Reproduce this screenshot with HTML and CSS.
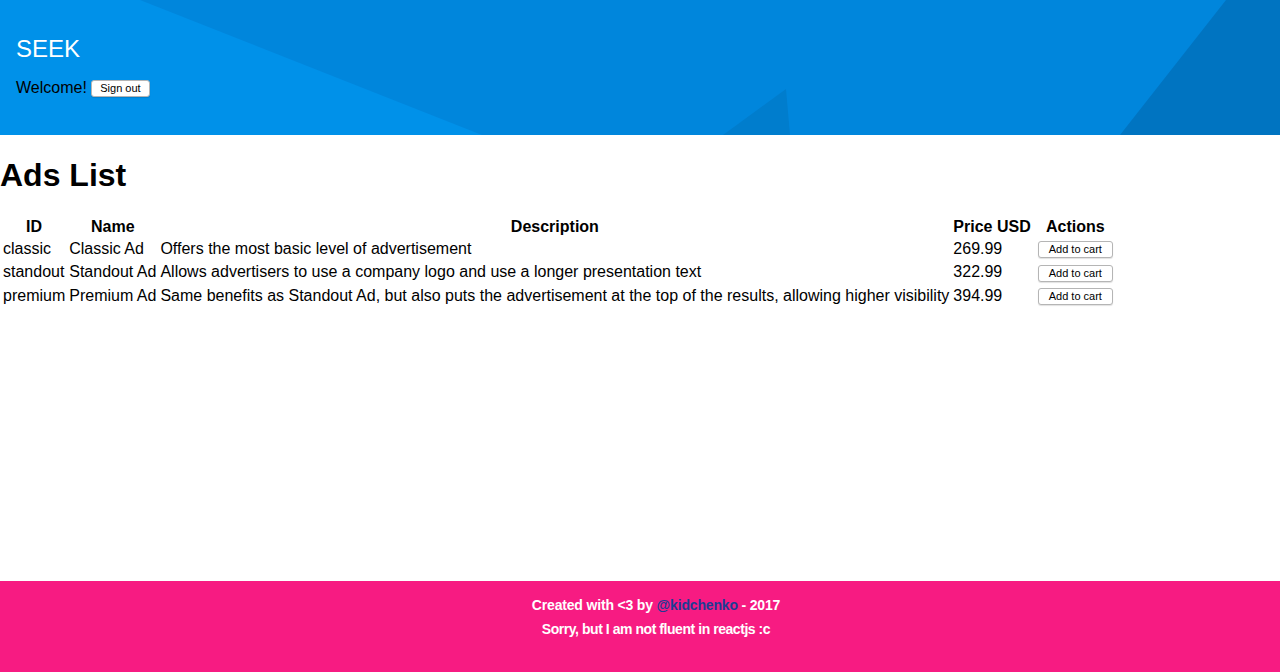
FILE: index.html
```html
<!DOCTYPE html>
<html>
<head>
<meta charset="utf-8">
<link rel="stylesheet" href="styles.css">
</head>
<body>
<div class="page">
  <header class="hero">
    <svg class="hero-bg" viewBox="0 0 1280 135" preserveAspectRatio="none" aria-hidden="true">
      <rect x="0" y="0" width="1280" height="135" fill="#0091e9"/>
      <polygon points="140,0 1280,0 1280,135 482,135" fill="#0086dc"/>
      <polygon points="723,135 786,89 790,135" fill="#007dcd"/>
      <polygon points="1226,0 1280,0 1280,135 1120,135" fill="#0074c1"/>
    </svg>
    <div class="hero-content">
      <div class="brand">SEEK</div>
      <div class="welcome">Welcome! <button class="btn">Sign out</button></div>
    </div>
  </header>
  <main class="main">
    <h1 class="title">Ads List</h1>
    <table class="ads">
      <thead>
        <tr><th>ID</th><th>Name</th><th>Description</th><th>Price USD</th><th>Actions</th></tr>
      </thead>
      <tbody>
        <tr><td>classic</td><td>Classic Ad</td><td>Offers the most basic level of advertisement</td><td>269.99</td><td class="act"><button class="btn">Add to cart</button></td></tr>
        <tr><td>standout</td><td>Standout Ad</td><td>Allows advertisers to use a company logo and use a longer presentation text</td><td>322.99</td><td class="act"><button class="btn">Add to cart</button></td></tr>
        <tr><td>premium</td><td>Premium Ad</td><td>Same benefits as Standout Ad, but also puts the advertisement at the top of the results, allowing higher visibility</td><td>394.99</td><td class="act"><button class="btn">Add to cart</button></td></tr>
      </tbody>
    </table>
  </main>
  <footer class="footer">
    <div>Created with &lt;3 by <a class="handle" href="#">@kidchenko</a> - 2017</div>
    <div class="sorry">Sorry, but I am not fluent in reactjs :c</div>
  </footer>
</div>
</body>
</html>
```
FILE: styles.css
```css
html, body {
  margin: 0;
  padding: 0;
}
body {
  font-family: "Liberation Sans", Arial, Helvetica, sans-serif;
  font-size: 16px;
  color: #000;
  background: #fff;
}
.page {
  min-height: 100vh;
  display: flex;
  flex-direction: column;
}
.hero {
  position: relative;
  height: 135px;
  overflow: hidden;
}
.hero-bg {
  position: absolute;
  left: 0;
  top: 0;
  width: 100%;
  height: 100%;
  display: block;
}
.hero-content {
  position: relative;
  padding: 35px 16px 0;
}
.brand {
  color: #fff;
  font-size: 24px;
  line-height: 28px;
}
.welcome {
  margin-top: 15px;
  font-size: 16px;
  line-height: 20px;
}
.btn {
  font-family: "Liberation Sans", Arial, Helvetica, sans-serif;
  font-size: 11px;
  line-height: 13px;
  padding: 1px 10px;
  background: #fff;
  color: #000;
  border: 1px solid #b5b5b5;
  border-radius: 3px;
  box-shadow: 0 1px 1px rgba(0,0,0,0.12);
  vertical-align: middle;
  height: 17px;
}
.welcome .btn {
  padding: 1px 8px;
}
.main {
  flex: 1;
}
.title {
  font-size: 32px;
  font-weight: bold;
  margin: 22px 0 22px;
  line-height: 37px;
}
.ads {
  border-spacing: 2px;
  margin-top: -2px;
}
.ads th, .ads td {
  padding: 1px;
  line-height: 19px;
}
.ads th {
  font-weight: bold;
  text-align: center;
  padding-bottom: 0;
}
.ads td {
  text-align: left;
}
.ads td.act {
  text-align: center;
  padding: 1px 4px;
}
.footer {
  background: #f71b82;
  color: #fff;
  text-align: center;
  font-size: 14px;
  font-weight: bold;
  letter-spacing: -0.17px;
  line-height: 24px;
  padding: 12px 0 31px 32px;
}
.sorry {
  letter-spacing: -0.45px;
}
.handle {
  color: #1c3c94;
  text-decoration: none;
}
```
